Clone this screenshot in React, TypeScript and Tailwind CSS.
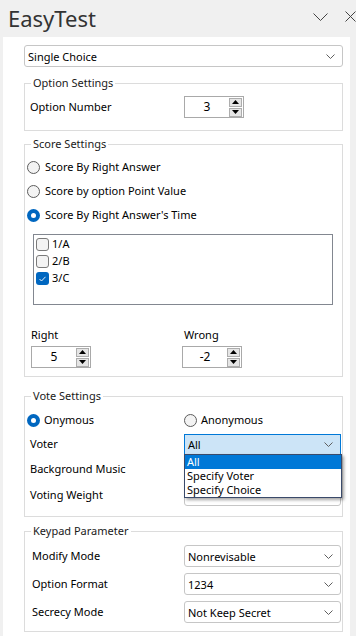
import React from "react";

const Chevron = () => (
  <svg width="9" height="5" viewBox="0 0 9 5" className="shrink-0">
    <path d="M0.5 0.5 L4.5 4.5 L8.5 0.5" fill="none" stroke="#5f5f5f" strokeWidth="1" />
  </svg>
);

const Combo = ({ text, className = "" }: { text: string; className?: string }) => (
  <div
    className={`h-[22px] border border-[#c6c6c6] rounded-[3px] bg-white flex items-center justify-between pl-[3px] pr-[7px] ${className}`}
  >
    <span className="leading-none">{text}</span>
    <Chevron />
  </div>
);

const SpinBtn = ({ up }: { up?: boolean }) => (
  <div className="h-[9px] w-[13px] bg-[#e5e5e5] border border-[#adadad] flex items-center justify-center">
    <svg width="7" height="4" viewBox="0 0 7 4">
      {up ? <path d="M0 4 L3.5 0 L7 4 Z" fill="#000" /> : <path d="M0 0 L3.5 4 L7 0 Z" fill="#000" />}
    </svg>
  </div>
);

const Spinner = ({ value }: { value: string }) => (
  <div className="w-[60px] h-[22px] border border-[#a9a9a9] bg-white flex items-center">
    <div className="flex-1 text-center leading-none text-[12px]">{value}</div>
    <div className="flex flex-col gap-[1px] pr-[1px]">
      <SpinBtn up />
      <SpinBtn />
    </div>
  </div>
);

const Radio = ({ checked }: { checked?: boolean }) =>
  checked ? (
    <div className="w-[13px] h-[13px] rounded-full bg-[#0067c0] flex items-center justify-center shrink-0">
      <div className="w-[5px] h-[5px] rounded-full bg-white" />
    </div>
  ) : (
    <div className="w-[13px] h-[13px] rounded-full border border-[#5c5c5c] bg-[#f3f3f3] shrink-0" />
  );

const Check = ({ checked }: { checked?: boolean }) =>
  checked ? (
    <div className="w-[13px] h-[13px] rounded-[3px] bg-[#0067c0] flex items-center justify-center shrink-0">
      <svg width="7" height="6" viewBox="0 0 7 6">
        <path d="M0.5 3 L2.5 5 L6.5 0.8" fill="none" stroke="#fff" strokeWidth="0.9" />
      </svg>
    </div>
  ) : (
    <div className="w-[13px] h-[13px] rounded-[3px] border border-[#7a7a7a] bg-[#f3f3f3] shrink-0" />
  );

const Group = ({ title, children, className = "" }: { title: string; children: React.ReactNode; className?: string }) => (
  <fieldset className={`border border-[#dcdcdc] ${className}`}>
    <legend className="ml-[6px] px-[2px] leading-[16px] text-[#1a1a1a]">{title}</legend>
    {children}
  </fieldset>
);

export default function App() {
  return (
    <div className="w-[356px] h-[636px] bg-[#f0f0f0] overflow-hidden flex flex-col font-['Noto_Sans',sans-serif] text-[11px] text-black">
      <div className="h-[37px] shrink-0 flex items-center pl-[8px] relative">
        <span className="text-[22px] leading-none text-[#333] -mt-[1px]">EasyTest</span>
        <div className="flex-1" />
        <svg width="15" height="8" viewBox="0 0 15 8" className="mr-[28px] -mt-[4px]">
          <path d="M0.5 0.5 L7.5 7.5 L14.5 0.5" fill="none" stroke="#444" strokeWidth="1" />
        </svg>
        <svg width="12" height="11" viewBox="0 0 12 11" className="absolute left-[345px] top-[11px]">
          <path d="M0.5 0.5 L10.5 10.5 M10.5 0.5 L0.5 10.5" fill="none" stroke="#444" strokeWidth="1" />
        </svg>
      </div>
      <div className="flex-1 ml-[3px] w-[347px] bg-white pl-[21px] pr-[7px] pt-[8px]">
        <Combo text="Single Choice" className="h-[22px]" />

        <Group title="Option Settings" className="mt-[8px]">
          <div className="flex items-center pl-[5px] pt-[5px] pb-[12px]">
            <span className="w-[154px]">Option Number</span>
            <Spinner value="3" />
          </div>
        </Group>

        <Group title="Score Settings" className="mt-[5px]">
          <div className="pl-[2px] pt-[3px]">
            {["Score By Right Answer", "Score by option Point Value", "Score By Right Answer's Time"].map((t, i) => (
              <div key={t} className="h-[24px] flex items-center gap-[5px]">
                <Radio checked={i === 2} />
                <span>{t}</span>
              </div>
            ))}
          </div>
          <div className="ml-[8px] mt-[7px] w-[300px] h-[71px] border border-[#828790] pt-[1px] pl-[2px]">
            {["1/A", "2/B", "3/C"].map((t, i) => (
              <div key={t} className="h-[17px] flex items-center gap-[3px]">
                <Check checked={i === 2} />
                <span>{t}</span>
              </div>
            ))}
          </div>
          <div className="flex pl-[6px] mt-[22px] pb-[8px]">
            <div className="w-[151px] flex flex-col">
              <span className="h-[16px] leading-[16px]">Right</span>
              <div className="mt-[3px]">
                <Spinner value="5" />
              </div>
            </div>
            <div className="flex flex-col">
              <span className="h-[16px] leading-[16px] ml-[2px]">Wrong</span>
              <div className="mt-[3px]">
                <Spinner value="-2" />
              </div>
            </div>
          </div>
        </Group>

        <Group title="Vote Settings" className="mt-[11px]">
          <div className="h-[24px] flex items-center pl-[2px] mt-[4px]">
            <div className="w-[157px] flex items-center gap-[4px]">
              <Radio checked />
              <span>Onymous</span>
            </div>
            <div className="flex items-center gap-[4px]">
              <Radio />
              <span>Anonymous</span>
            </div>
          </div>
          <div className="h-[24px] flex items-center pl-[5px]">
            <span className="w-[154px]">Voter</span>
            <div className="relative w-[157px]">
              <div className="h-[21px] border border-[#0078d7] bg-[#cce4f7] flex items-center justify-between pl-[3px] pr-[7px]">
                <span className="leading-none">All</span>
                <Chevron />
              </div>
              <div className="absolute left-0 top-[20px] w-[158px] border border-[#3a4a6a] bg-white shadow-[2px_2px_3px_rgba(0,0,0,0.35)] z-10">
                <div className="h-[14px] leading-[14px] bg-[#0078d7] text-white px-[2px]">All</div>
                <div className="h-[14px] leading-[14px] px-[2px]">Specify Voter</div>
                <div className="h-[14px] leading-[14px] px-[2px]">Specify Choice</div>
              </div>
            </div>
          </div>
          <div className="h-[26px] flex items-center pl-[5px]">
            <span className="w-[154px]">Background Music</span>
            <div className="h-[22px] w-[157px] border border-[#c6c6c6] rounded-[3px] bg-white" />
          </div>
          <div className="h-[26px] flex items-center pl-[5px] mb-[8px]">
            <span className="w-[154px]">Voting Weight</span>
            <div className="h-[22px] w-[157px] border border-[#c6c6c6] rounded-[3px] bg-white" />
          </div>
        </Group>

        <Group title="Keypad Parameter" className="mt-[6px]">
          <div className="pt-[3px] pb-[5px]">
            {[
              ["Modify Mode", "Nonrevisable"],
              ["Option Format", "1234"],
              ["Secrecy Mode", "Not Keep Secret"],
            ].map(([l, v]) => (
              <div key={l} className="h-[28px] flex items-center pl-[7px]">
                <span className="w-[152px]">{l}</span>
                <Combo text={v} className="w-[157px]" />
              </div>
            ))}
          </div>
        </Group>
      </div>
    </div>
  );
}
